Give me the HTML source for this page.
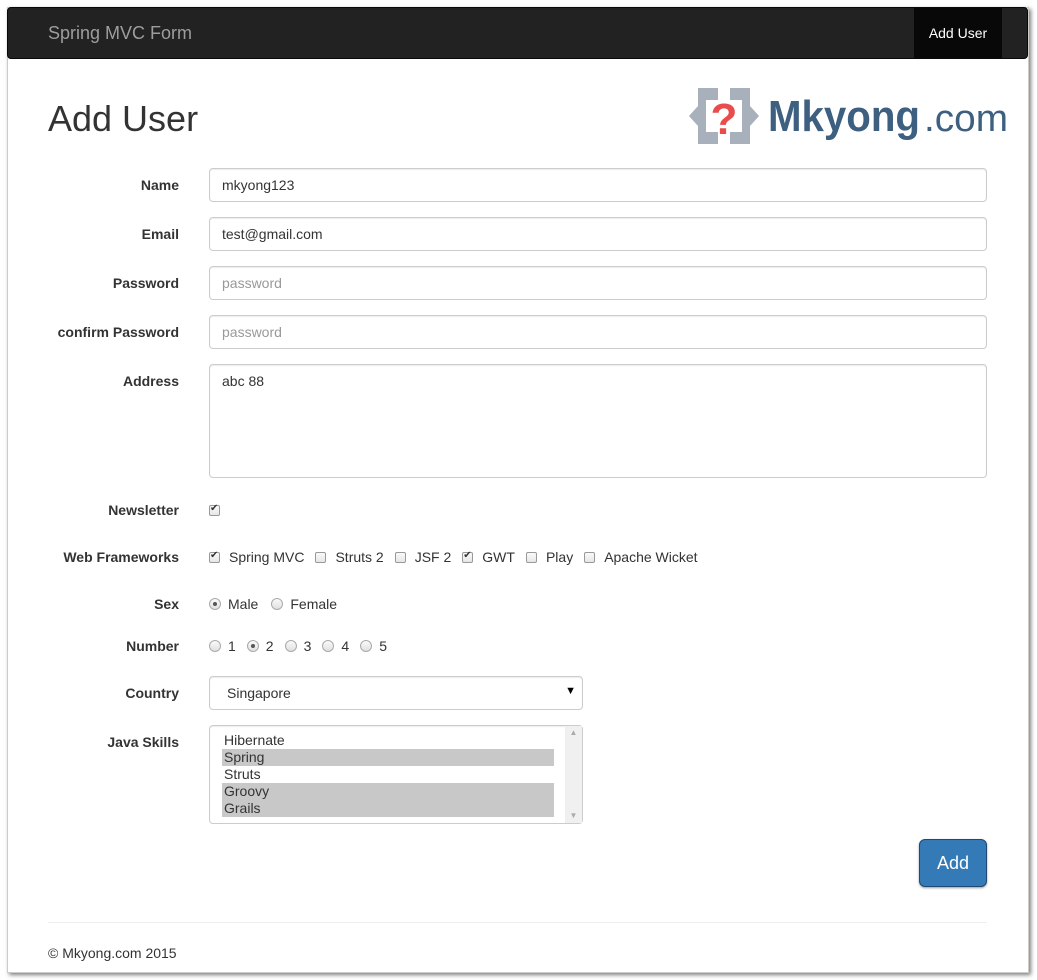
<!DOCTYPE html>
<html><head><style>
*{box-sizing:border-box}
body{margin:0;width:1037px;height:980px;background:#fff;font-family:"Liberation Sans",Arial,sans-serif;font-size:14px;color:#333;position:relative;overflow:hidden}
.frame{position:absolute;left:7px;top:7px;width:1022px;height:966px;background:#fff;box-shadow:2px 2px 4px rgba(0,0,0,.5);border:1px solid #ccc}
.nav{position:absolute;left:7px;top:7px;width:1021px;height:52px;background:#222;border:1px solid #080808;border-radius:4px}
.brand{position:absolute;left:40px;top:15px;color:#9d9d9d;font-size:18px}
.navact{position:absolute;left:906px;top:0;width:88px;height:50px;background:#080808;color:#fff;line-height:50px;text-align:center}
h1{position:absolute;left:48px;top:98px;margin:0;font-size:36px;font-weight:500;color:#333}
.lbl{position:absolute;right:858px;font-weight:bold;text-align:right}
.inp{position:absolute;left:209px;width:778px;height:34px;border:1px solid #ccc;border-radius:4px;padding:8px 12px 6px;box-shadow:inset 0 1px 1px rgba(0,0,0,.075)}
.ph{color:#999}
.cb{display:inline-block;width:11px;height:11px;border:1px solid #999;border-radius:2px;background:linear-gradient(#fafafa,#e6e6e6);vertical-align:-1px;position:relative;margin-right:9px}
.cb.on::after{content:"✔";position:absolute;left:0;top:-3px;font-size:10px;color:#333}
.rd{display:inline-block;width:12px;height:12px;border:1px solid #aaa;border-radius:50%;background:linear-gradient(#fafafa,#e0e0e0);vertical-align:-1px;position:relative;margin-right:7px}
.rd.on::after{content:"";position:absolute;left:3px;top:3px;width:4px;height:4px;border-radius:50%;background:#555}
.row{position:absolute;left:209px}
.sp{margin-right:11px}
</style></head><body>
<div class="frame"></div>
<div class="nav"><span class="brand">Spring MVC Form</span><div class="navact">Add User</div></div>
<h1>Add User</h1>
<svg style="position:absolute;left:688px;top:88px" width="322" height="58" viewBox="0 0 322 58">
<path d="M10 0h20v12h-12v32h12v12h-20v-18l-9-10 9-10z" fill="#a7b0bb"/>
<path d="M62 0h-20v12h12v32h-12v12h20v-18l9-10-9-10z" fill="#a7b0bb"/>
<text x="36" y="46" text-anchor="middle" font-family="Liberation Sans" font-weight="bold" font-size="44" fill="#e84c4c">?</text>
<text x="80" y="43" font-family="Liberation Sans" font-weight="bold" font-size="44" fill="#3d5f80" textLength="152" lengthAdjust="spacingAndGlyphs">Mkyong</text>
<text x="236" y="43" font-family="Liberation Sans" font-size="38" fill="#3d5f80" textLength="84" lengthAdjust="spacingAndGlyphs">.com</text>
</svg>
<div class="lbl" style="top:177px">Name</div><div class="inp" style="top:168px">mkyong123</div>
<div class="lbl" style="top:226px">Email</div><div class="inp" style="top:217px">test@gmail.com</div>
<div class="lbl" style="top:275px">Password</div><div class="inp ph" style="top:266px">password</div>
<div class="lbl" style="top:324px">confirm Password</div><div class="inp ph" style="top:315px">password</div>
<div class="lbl" style="top:373px">Address</div><div class="inp" style="top:364px;height:114px">abc 88</div>
<div class="lbl" style="top:502px">Newsletter</div><div class="row" style="top:502px"><span class="cb on"></span></div>
<div class="lbl" style="top:549px">Web Frameworks</div>
<div class="row" style="top:549px"><span class="cb on"></span><span class="sp">Spring MVC</span><span class="cb"></span><span class="sp">Struts 2</span><span class="cb"></span><span class="sp">JSF 2</span><span class="cb on"></span><span class="sp">GWT</span><span class="cb"></span><span class="sp">Play</span><span class="cb"></span>Apache Wicket</div>
<div class="lbl" style="top:596px">Sex</div>
<div class="row" style="top:596px"><span class="rd on"></span><span style="margin-right:13px">Male</span><span class="rd"></span>Female</div>
<div class="lbl" style="top:638px">Number</div>
<div class="row" style="top:638px"><span class="rd"></span><span class="sp">1</span><span class="rd on"></span><span class="sp">2</span><span class="rd"></span><span class="sp">3</span><span class="rd"></span><span class="sp">4</span><span class="rd"></span>5</div>
<div class="lbl" style="top:685px">Country</div>
<div class="inp" style="top:676px;width:374px;padding-left:17px">Singapore<span style="position:absolute;right:6px;top:8px;font-size:11px;color:#000">▼</span></div>
<div class="lbl" style="top:734px">Java Skills</div>
<div class="inp" style="top:725px;width:374px;height:99px;padding:5px 12px">
<div style="position:absolute;left:12px;top:6px;width:332px;line-height:17px">
<div style="padding-left:2px">Hibernate</div><div style="background:#c8c8c8;padding-left:2px">Spring</div><div style="padding-left:2px">Struts</div><div style="background:#c8c8c8;padding-left:2px">Groovy</div><div style="background:#c8c8c8;padding-left:2px">Grails</div></div>
<div style="position:absolute;right:0;top:0;width:17px;height:97px;background:#f0f0f0;color:#aaa;font-size:8px;text-align:center;line-height:14px">▲<div style="position:absolute;bottom:0;width:17px">▼</div></div>
</div>
<div style="position:absolute;left:919px;top:839px;width:68px;height:48px;background:#337ab7;border:1px solid #1e4a73;border-radius:6px;color:#fff;font-size:18px;text-align:center;line-height:46px;box-shadow:0 1px 2px rgba(0,0,0,.4)">Add</div>
<div style="position:absolute;left:48px;top:922px;width:939px;border-top:1px solid #eee"></div>
<div style="position:absolute;left:48px;top:945px">© Mkyong.com 2015</div>
</body></html>
